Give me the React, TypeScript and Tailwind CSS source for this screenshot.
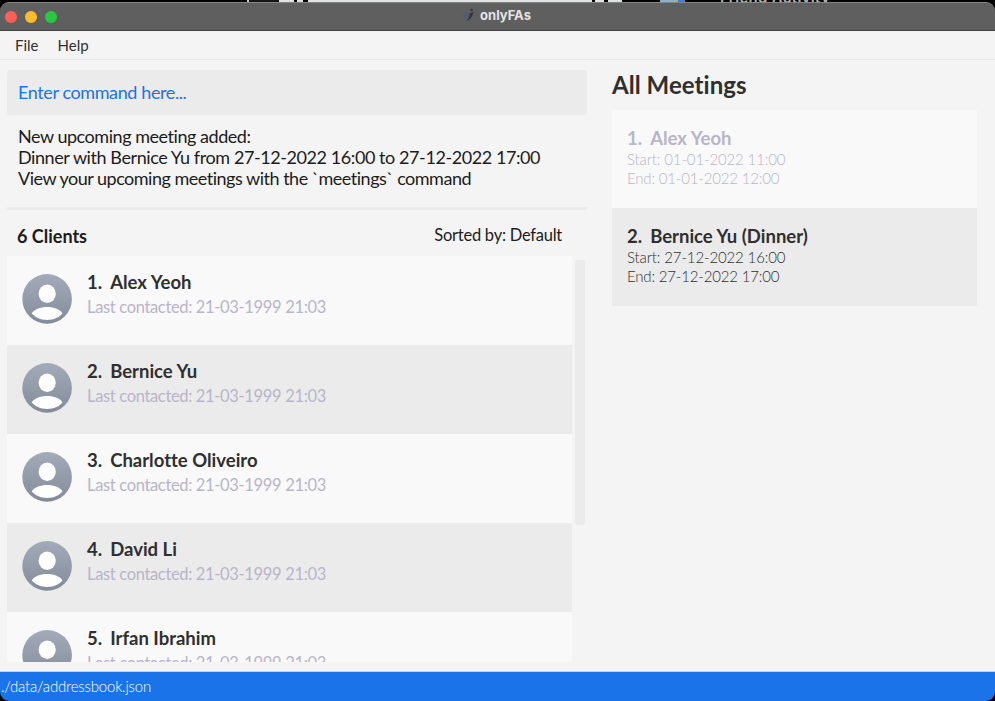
import React from "react";

const clients = ["Alex Yeoh", "Bernice Yu", "Charlotte Oliveiro", "David Li", "Irfan Ibrahim"];

const meetings = [
  { title: "Alex Yeoh", start: "01-01-2022 11:00", end: "01-01-2022 12:00", past: true },
  { title: "Bernice Yu (Dinner)", start: "27-12-2022 16:00", end: "27-12-2022 17:00", past: false },
];

function Avatar() {
  return (
    <svg viewBox="0 0 50 50" className="h-[50px] w-[50px] shrink-0">
      <defs>
        <linearGradient id="avatar" x1="0" y1="0" x2="0" y2="1">
          <stop offset="0" stopColor="#a3abba" />
          <stop offset="1" stopColor="#848b98" />
        </linearGradient>
      </defs>
      <circle cx="25.1" cy="24.9" r="24.8" fill="url(#avatar)" />
      <ellipse cx="25.2" cy="19.7" rx="8.6" ry="9.2" fill="#fff" />
      <path d="M9.700 39.300C12 35.500 18 32.900 25.100 32.900s13.200 2.600 15.400 6.400C37.500 43.300 31.800 46 25.100 46S13 43.300 9.700 39.300Z" fill="#fff" />
    </svg>
  );
}

function TitleBar() {
  return (
    <div className="h-[31px] shrink-0 bg-black">
      {/* Sliver of the desktop visible above the window */}
      <div className="flex h-[2px] overflow-hidden">
        <div className="w-[247px] bg-black" />
        <div className="w-[2px] bg-[#c9c9c9]" />
        <div className="w-[30px] bg-[#151515]" />
        <div className="w-[15px] bg-[#dfe3e2]" />
        <div className="w-[3px] bg-black" />
        <div className="w-[6px] bg-[#dfe3e2]" />
        <div className="w-[5px] bg-black" />
        <div className="w-[284px] bg-[#dfe3e2]" />
        <div className="w-[3px] bg-black" />
        <div className="w-[9px] bg-[#dfe3e2]" />
        <div className="w-[4px] bg-black" />
        <div className="w-[14px] bg-[#dfe3e2]" />
        <div className="w-[38px] bg-black" />
        <div className="w-[18px] bg-[#8fb0c4]" />
        <div className="w-[7px] bg-[#3f7fd6]" />
        <div className="ml-[35px] flex w-[120px] items-end">
          <div className="-mb-[3px] font-['Inter','Liberation_Sans',sans-serif] text-[15px] leading-[15px] font-semibold tracking-[0.3px] whitespace-nowrap text-[#b5b5b5]">Friend Activity</div>
        </div>
      </div>
      <div className="relative flex h-[29px] items-center justify-center rounded-t-[9px] border-t border-b border-t-[#858585] border-b-[#454545] bg-[#5f5f5f]">
        <div className="absolute left-[5px] flex gap-2">
          <div className="h-3 w-3 rounded-full bg-[#fe5f57]" />
          <div className="h-3 w-3 rounded-full bg-[#febb2e]" />
          <div className="h-3 w-3 rounded-full bg-[#28c840]" />
        </div>
        <div className="flex items-center pr-[3px] pb-[3px]">
          <svg viewBox="0 0 14 14" className="mr-[5px] h-[14px] w-[14px]">
            <path d="M1 7 5 4 7.500 5.500 7.500 8.500 5 11 3.500 8Z" fill="#4b5c83" />
            <path d="M5 12.700C10.500 12 11 7.500 13 3.500 11 5 9.500 4.800 8.300 5.500 9 8.500 7.800 11 5 12.700Z" fill="#333539" />
            <circle cx="10.500" cy="2" r="1.300" fill="#383a3e" />
          </svg>
          <div className="font-['Inter','Liberation_Sans',sans-serif] text-[13px] leading-4 font-bold text-[#e4e4e4]">onlyFAs</div>
        </div>
      </div>
    </div>
  );
}

export default function App() {
  return (
    <div className="flex h-[701px] w-[995px] flex-col overflow-hidden bg-[#f4f4f4] font-['Lato','Liberation_Sans',sans-serif] whitespace-nowrap text-[#2f2f2f] [font-variant-ligatures:none]">
      <TitleBar />
      <div className="flex h-[29px] shrink-0 items-center gap-[19px] border-b border-[#e9e9e9] pl-[15px] text-[15px] leading-5">
        <div>File</div>
        <div>Help</div>
      </div>
      <div className="flex h-[611px] shrink-0">
        <div className="ml-[7px] w-[580px] shrink-0 pt-[10px]">
          <div className="flex h-[45px] items-center rounded-[3px] bg-[#ebebeb] pl-[11px] text-[18px] tracking-[-0.39px] text-[#1a73e8]">
            Enter command here...
          </div>
          <div className="h-[95px] border-b-[3px] border-[#ebebeb] pt-[11px] pl-[11px] text-[18px] leading-[21px] text-[#1c1c1c]">
            <div className="tracking-[-0.46px]">New upcoming meeting added:</div>
            <div className="tracking-[-0.42px]">Dinner with Bernice Yu from 27-12-2022 16:00 to 27-12-2022 17:00</div>
            <div className="tracking-[-0.49px]">View your upcoming meetings with the `meetings` command</div>
          </div>
          <div className="flex h-[46px] items-center justify-between pt-[6px] pr-[25px] pl-[10px] text-[#1c1c1c]">
            <div className="text-[18px] font-bold">6 Clients</div>
            <div className="pb-[2px] text-[16.500px] tracking-[-0.25px]">Sorted by: Default</div>
          </div>
          <div className="flex gap-[3px]">
            <div className="h-[406px] w-[565px] overflow-hidden">
              {clients.map((name, i) => (
                <div key={name} className="flex h-[89px] gap-[15px] pt-[18px] pl-[15px] odd:bg-[#f9f9f9] even:bg-[#ebebeb]">
                  <Avatar />
                  <div className="-mt-[4px]">
                    <div className="flex gap-2 text-[18.500px] leading-6 font-bold">
                      <span>{i + 1}.</span>
                      <span>{name}</span>
                    </div>
                    <div className="text-[16.500px] leading-[26px] tracking-[-0.34px] text-[#b8b5c9]">Last contacted: 21-03-1999 21:03</div>
                  </div>
                </div>
              ))}
            </div>
            <div className="mt-1 h-[265px] w-[10px] rounded-[3px] bg-[#ebebeb]" />
          </div>
        </div>
        <div className="ml-[25px] w-[365px] pt-[10px]">
          <div className="h-[40px] text-[24px] leading-[30px] font-bold tracking-[0.05px]">All Meetings</div>
          {meetings.map((m, i) => (
            <div key={m.title} className={m.past ? "h-[98px] bg-[#f9f9f9] pt-[17px] pl-[15px] text-[#b8b5c9]" : "h-[98px] bg-[#ebebeb] pt-[17px] pl-[15px]"}>
              <div className="flex gap-2 text-[18.500px] leading-[23px] font-bold">
                <span>{i + 1}.</span>
                <span>{m.title}</span>
              </div>
              <div className="text-[15px] leading-[19px] font-light tracking-[-0.13px]">Start: {m.start}</div>
              <div className="text-[15px] leading-[19px] font-light tracking-[-0.17px]">End: {m.end}</div>
            </div>
          ))}
        </div>
      </div>
      <div className="h-[30px] bg-black">
        <div className="flex h-[30px] items-center rounded-b-[9px] border-t border-[#c5d3e6] bg-[#1a73e8] pl-px text-[15px] font-light tracking-[-0.19px] text-white">./data/addressbook.json</div>
      </div>
    </div>
  );
}
